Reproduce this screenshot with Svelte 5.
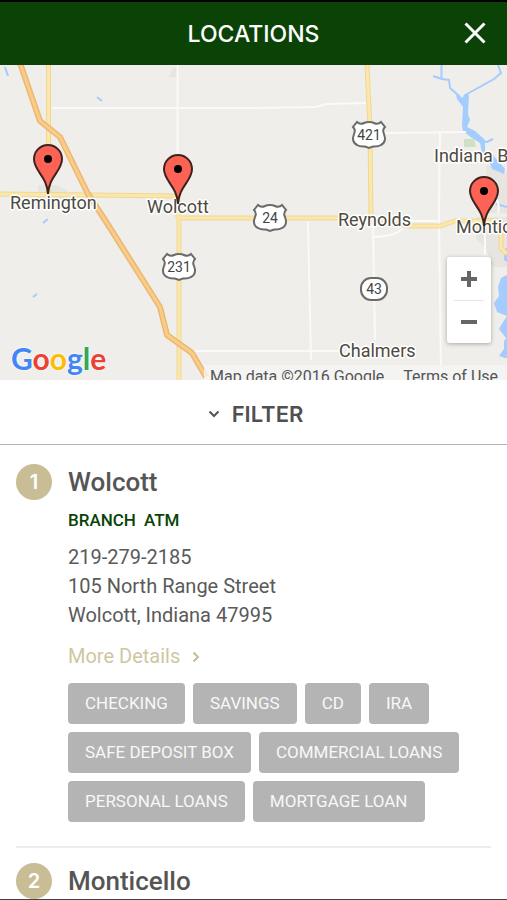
<script>
    let filterOpen = $state(false);

    const locations = [
        {
            name: "Wolcott",
            types: ["BRANCH", "ATM"],
            phone: "219-279-2185",
            street: "105 North Range Street",
            city: "Wolcott, Indiana 47995",
            services: [
                "CHECKING",
                "SAVINGS",
                "CD",
                "IRA",
                "SAFE DEPOSIT BOX",
                "COMMERCIAL LOANS",
                "PERSONAL LOANS",
                "MORTGAGE LOAN"
            ]
        },
        { name: "Monticello" }
    ];

    // Map coordinates, in the viewBox of the map svg
    const pins = [
        { x: 48, y: 94 },
        { x: 178, y: 104 },
        { x: 484, y: 126 }
    ];

    const towns = [
        { name: "Remington", x: 10, y: 144 },
        { name: "Wolcott", x: 147, y: 148 },
        { name: "Indiana Beach", x: 434, y: 97 },
        { name: "Reynolds", x: 338, y: 161 },
        { name: "Monticello", x: 456, y: 168 },
        { name: "Chalmers", x: 339, y: 292 }
    ];

    const shields = [
        { number: "421", x: 369, y: 70 },
        { number: "24", x: 270, y: 153 },
        { number: "231", x: 179, y: 202 }
    ];
</script>

<div class="app">
    <header>
        <h1>LOCATIONS</h1>
        <button class="close" aria-label="Close">
            <svg viewBox="0 0 24 24" width="24" height="24" aria-hidden="true">
                <path d="M2.500 2.500L21.500 21.500M21.500 2.500L2.500 21.500" />
            </svg>
        </button>
    </header>

    <section class="map" aria-label="Map">
        <svg class="map-canvas" viewBox="0 0 507 315" preserveAspectRatio="xMidYMid slice">
            <g class="area">
                <path d="M38 120h18l12 6v8H38z" />
                <path d="M173 3h4v9h-8z" />
                <path d="M476 152h31v50h-14l-8-20-9-8z" />
                <path d="M487 100l20 8v40h-22z" />
            </g>
            <path class="park" d="M464 74h10l2 8h-12zM472 67l7 3 3 9-7-6z" />

            <g class="water-line">
                <path d="M441.500 0v14M433 11l9 3 7 1 1 8 9 8 6 8" />
                <path d="M498 0l3 8-7 6-27 15-3 2" />
                <path d="M480 76l7 1 6-3M484 75v13l8 5 8 11" />
                <path d="M5 2l3 9M97 32l5 4M43 158l5-4M33 232l4-3M496 139l11 3" />
            </g>
            <g class="water">
                <path d="M465 29l4 1-1 19 2 6-3 7 8 4 9 8 1 12 8 4 12 14-1 5-12-5-3-8-7-8-2-10-8-5-9-7-1-5 1-19-6-8-1-4 6 3z" />
                <path d="M507 182l-3 5v8l3 2zM507 210l-6 3-3 9 1 9-5 7 3 9 10 4zM507 251l-4 6-4 7 3 4 5 6zM507 272l-3 4v8l-5 7 6 2h2z" />
            </g>

            <g class="minor">
                <path d="M177.500 0V124M52 43H253L316 42L326 39L366 38" />
                <path d="M385 68L466 67M440 68L439 150L441 315M308 157L311 295M373 160L375 275" />
                <path d="M192 286H340M373 172Q405 171 404 157M410 156H439M485 153V190M492 128Q501 138 498 148" />
            </g>

            <g class="major-edge">
                <path d="M48.500 0V129M0 129L178 131V153" />
                <path d="M179 315V153H338L410 161H440L455 156H496L501 170V183L507 189" />
                <path d="M367 0L370 65L371 153" />
            </g>
            <g class="major">
                <path d="M48.500 0V129M0 129L178 131V153" />
                <path d="M179 315V153H338L410 161H440L455 156H496L501 170V183L507 189" />
                <path d="M367 0L370 65L371 153" />
            </g>
            <path class="highway-edge" d="M20 -2L40 56L60 72L88 129L105 155L160 242L167 270L192 288L206 312" />
            <path class="highway" d="M20 -2L40 56L60 72L88 129L105 155L160 242L167 270L192 288L206 312" />

            {#each shields as shield}
                <g class="shield" transform="translate({shield.x} {shield.y})">
                    <path d="M-12 -13Q-9 -10 -5 -12Q-3 -13 0 -13Q3 -13 5 -12Q9 -10 12 -13L16 -8Q13 -5 15 -1Q18 7 12 10Q9 12 4 11.500L0 13L-4 11.500Q-9 12 -12 10Q-18 7 -15 -1Q-13 -5 -16 -8Z" />
                    <text y="5">{shield.number}</text>
                </g>
            {/each}
            <g class="shield" transform="translate(374 224)">
                <rect x="-13" y="-11" width="26" height="22" rx="10" />
                <text y="5">43</text>
            </g>

            {#each towns as town}
                <text class="town" x={town.x} y={town.y}>{town.name}</text>
            {/each}

            {#each pins as pin}
                <g class="pin" transform="translate({pin.x} {pin.y})">
                    <path d="M0 35C-1 17 -14 12 -14 0A14 14 0 0 1 14 0C14 12 1 17 0 35Z" />
                    <circle r="4" />
                </g>
            {/each}
        </svg>

        <a class="google" href="#google" aria-label="Google">
            <span class="blue">G</span><span class="red">o</span><span class="yellow">o</span><span class="blue">g</span><span class="green">l</span><span class="red">e</span>
        </a>

        <div class="zoom">
            <button aria-label="Zoom in">
                <svg viewBox="0 0 18 18" width="18" height="18" aria-hidden="true"><path d="M1 9H17M9 1V17" /></svg>
            </button>
            <button aria-label="Zoom out">
                <svg viewBox="0 0 18 18" width="18" height="18" aria-hidden="true"><path d="M1 9H17" /></svg>
            </button>
        </div>

        <div class="credits">
            <span>Map data ©2016 Google</span>
            <a href="#terms">Terms of Use</a>
        </div>
    </section>

    <button class="filter" aria-expanded={filterOpen} onclick={() => (filterOpen = !filterOpen)}>
        <svg viewBox="0 0 12 8" width="12" height="8" aria-hidden="true">
            <path d="M1.500 1.500L6 6L10.500 1.500" />
        </svg>
        FILTER
    </button>

    <ol class="list">
        {#each locations as location, i}
            <li class="location">
                <span class="badge">{i + 1}</span>
                <div class="details">
                    <h2>{location.name}</h2>
                    {#if location.types}
                        <p class="types">
                            {#each location.types as type}
                                <span>{type}</span>
                            {/each}
                        </p>
                        <address>
                            {location.phone}<br />
                            {location.street}<br />
                            {location.city}
                        </address>
                        <a class="more" href="#details">
                            More Details
                            <svg viewBox="0 0 8 12" width="8" height="12" aria-hidden="true">
                                <path d="M1.500 1.500L6 6L1.500 10.500" />
                            </svg>
                        </a>
                        <ul class="services">
                            {#each location.services as service}
                                <li>{service}</li>
                            {/each}
                        </ul>
                    {/if}
                </div>
            </li>
        {/each}
    </ol>
</div>

<style>
    :global(body) {
        margin: 0;
        background: #fff;
    }

    .app {
        box-sizing: border-box;
        height: 100vh;
        display: flex;
        flex-direction: column;
        border-top: 2px solid #000;
        border-bottom: 1px solid #444;
        overflow: hidden;
        font-family: Roboto, "Liberation Sans", sans-serif;
        color: #5a5a5a;
    }

    button {
        margin: 0;
        padding: 0;
        border: 0;
        background: none;
        cursor: pointer;
    }

    svg {
        display: block;
        fill: none;
    }

    header {
        flex: none;
        display: grid;
        grid-template-columns: 64px 1fr 64px;
        align-items: center;
        height: 63px;
        background: #0b4306;
        color: #fff;
    }

    h1 {
        grid-column: 2;
        margin: 0;
        font: 500 23px/28px Inter, sans-serif;
        text-align: center;
    }

    .close {
        justify-self: center;
        padding: 8px 8px 10px;
    }

    .close path {
        stroke: #fff;
        stroke-width: 3;
    }

    .map {
        flex: none;
        position: relative;
        height: 315px;
        background: #f0eeea;
        overflow: hidden;
    }

    .map-canvas {
        width: 100%;
        height: 100%;
    }

    .area {
        fill: #e7e5e0;
    }

    .park {
        fill: #cfe0c4;
    }

    .water {
        fill: #a3ccff;
    }

    .water-line {
        stroke: #a3ccff;
        stroke-width: 2;
    }

    .minor {
        stroke: #fbfaf8;
        stroke-width: 2;
    }

    .major-edge {
        stroke: #eed79a;
        stroke-width: 5;
    }

    .major {
        stroke: #fbe8a8;
        stroke-width: 3;
    }

    .highway-edge {
        stroke: #eab873;
        stroke-width: 6;
        stroke-linejoin: round;
    }

    .highway {
        stroke: #fbcc87;
        stroke-width: 3;
        stroke-linejoin: round;
    }

    .shield path,
    .shield rect {
        fill: #fff;
        stroke: #6b6b6b;
        stroke-width: 2;
    }

    .shield text {
        fill: #444;
        font-size: 14px;
        text-anchor: middle;
    }

    .town {
        fill: #4d4a3f;
        stroke: #fff;
        stroke-width: 3px;
        stroke-linejoin: round;
        paint-order: stroke;
        font-size: 18px;
    }

    .pin path {
        fill: #fc6355;
        stroke: #3d2220;
        stroke-width: 2;
    }

    .pin circle {
        fill: #000;
    }

    .google {
        position: absolute;
        left: 11px;
        bottom: 4px;
        font: 700 30px/36px Lato, sans-serif;
        text-decoration: none;
        text-shadow: 0 0 2px #fff, 0 0 2px #fff;
    }

    .blue {
        color: #4285f4;
    }

    .red {
        color: #ea4335;
    }

    .yellow {
        color: #fbbc05;
    }

    .green {
        color: #34a853;
    }

    .zoom {
        position: absolute;
        right: 16px;
        bottom: 37px;
        width: 44px;
        border-radius: 3px;
        background: #fff;
        box-shadow: 0 1px 4px rgba(0, 0, 0, 0.3);
    }

    .zoom button {
        display: flex;
        align-items: center;
        justify-content: center;
        width: 100%;
        height: 43px;
    }

    .zoom button + button {
        border-top: 1px solid #e6e6e6;
        width: 30px;
        margin: 0 auto;
    }

    .zoom path {
        stroke: #666;
        stroke-width: 4;
    }

    .credits {
        position: absolute;
        right: 0;
        bottom: 0;
        display: flex;
        gap: 19px;
        height: 15px;
        padding: 0 9px 0 6px;
        overflow: hidden;
        background: rgba(245, 245, 245, 0.8);
        color: #555;
        font-size: 16px;
        line-height: 24px;
        white-space: nowrap;
    }

    .credits a {
        color: inherit;
        text-decoration: none;
    }

    .filter {
        flex: none;
        display: flex;
        align-items: center;
        justify-content: center;
        gap: 12px;
        height: 65px;
        padding: 3px 0 0 4px;
        border-bottom: 1px solid #b5b5b5;
        color: #505050;
        font: 600 22px/28px Inter, sans-serif;
    }

    .filter path {
        stroke: #555;
        stroke-width: 2;
    }

    .list {
        flex: 1;
        min-height: 0;
        margin: 0;
        padding: 0 16px;
        overflow-y: auto;
        scrollbar-width: none;
        list-style: none;
    }

    .location {
        display: flex;
        gap: 16px;
        padding: 19px 0 24px;
    }

    .location + .location {
        padding-top: 15px;
        border-top: 2px solid #ececec;
    }

    .badge {
        flex: none;
        width: 36px;
        height: 36px;
        border-radius: 50%;
        background: #c8bd94;
        color: #fff;
        font: 600 20px/36px Inter, sans-serif;
        text-align: center;
    }

    .details {
        flex: 1;
        min-width: 0;
    }

    h2 {
        margin: 0;
        color: #555;
        font-size: 26px;
        font-weight: 500;
        line-height: 36px;
    }

    .types {
        display: flex;
        gap: 8px;
        margin: 8px 0 11px;
        color: #0b4306;
        font-size: 17px;
        font-weight: 500;
        line-height: 24px;
    }

    address {
        font-size: 20px;
        font-style: normal;
        line-height: 29px;
    }

    .more {
        display: flex;
        align-items: center;
        gap: 12px;
        margin: 12px 0;
        color: #d0c69f;
        font-size: 20px;
        line-height: 29px;
        text-decoration: none;
    }

    .more path {
        stroke: #c8bd94;
        stroke-width: 2;
    }

    .services {
        display: flex;
        flex-wrap: wrap;
        gap: 8px;
        margin: 0;
        padding: 0;
        list-style: none;
    }

    .services li {
        padding: 0 17px;
        border-radius: 4px;
        background: #b4b4b4;
        color: #f8f8f8;
        font-size: 17px;
        line-height: 41px;
    }
</style>
